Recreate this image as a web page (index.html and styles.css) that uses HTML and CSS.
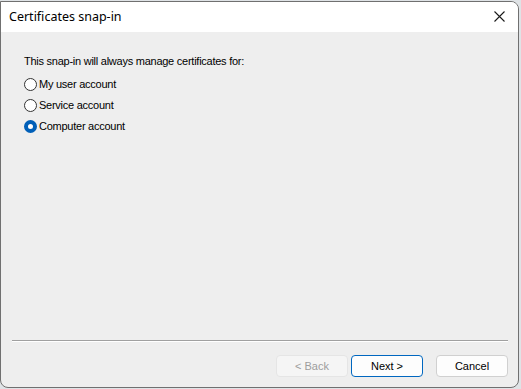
FILE: index.html
```html
<!DOCTYPE html>
<html lang="en">
<head>
  <meta charset="UTF-8" />
  <title>Certificates snap-in</title>
  <link rel="stylesheet" href="styles.css">
</head>
<body>
  <div class="dialog">
    <div class="titlebar">
      <span class="title">Certificates snap-in</span>
      <span class="close">
        <svg width="11" height="11" viewBox="0 0 11 11"><path d="M0.5 0.5 L10.5 10.5 M10.5 0.5 L0.5 10.5" stroke="#1a1a1a" stroke-width="1.1" fill="none"/></svg>
      </span>
    </div>
    <div class="content">
      <div class="main">
        <p class="prompt">This snap-in will always manage certificates for:</p>
        <label class="option"><span class="radio"></span>My user account</label>
        <label class="option"><span class="radio"></span>Service account</label>
        <label class="option"><span class="radio checked"></span>Computer account</label>
      </div>
      <div class="separator"></div>
      <div class="buttons">
        <button class="btn disabled">&lt; Back</button>
        <button class="btn default">Next &gt;</button>
        <button class="btn cancel">Cancel</button>
      </div>
    </div>
  </div>
</body>
</html>
```
FILE: styles.css
```css
body {
  margin: 0;
  background: #dfe3e6;
  font-family: "Liberation Sans", Arial, sans-serif;
  overflow: hidden;
}

.dialog {
  margin-top: 1px;
  width: 517px;
  height: 385px;
  border: 1px solid #707070;
  border-radius: 0 8px 8px 8px;
  background: #eeeeee;
  display: flex;
  flex-direction: column;
  overflow: hidden;
}

.titlebar {
  height: 30px;
  background: #ffffff;
  display: flex;
  align-items: center;
  justify-content: space-between;
  padding: 0 12px 0 8px;
}

.title {
  font-family: "Noto Sans", sans-serif;
  font-size: 12.5px;
  color: #000;
  margin-top: -1px;
}

.close {
  display: flex;
  margin-right: 1px;
  margin-top: -1px;
}

.content {
  flex: 1;
  display: flex;
  flex-direction: column;
  padding: 0 10px 10px 11px;
}

.main {
  flex: 1;
  padding: 22px 0 0 12px;
  font-size: 11px;
  letter-spacing: -0.25px;
  color: #000;
}

.prompt {
  margin: 0 0 10px;
  line-height: 14px;
}

.option {
  display: flex;
  align-items: center;
  height: 13px;
  margin-bottom: 8px;
  line-height: 13px;
}

.radio {
  box-sizing: border-box;
  width: 13px;
  height: 13px;
  border: 1px solid #333;
  border-radius: 50%;
  background: #fff;
  margin-right: 2px;
  flex: none;
}

.radio.checked {
  border: 4px solid #005fb8;
  background: #fff;
}

.separator {
  height: 1px;
  background: #a0a0a0;
  border-bottom: 1px solid #fff;
  margin-bottom: 13px;
}

.buttons {
  display: flex;
  justify-content: flex-end;
}

.btn {
  box-sizing: border-box;
  width: 72px;
  height: 22px;
  border-radius: 4px;
  border: 1px solid #d0d0d0;
  background: #fdfdfd;
  font-family: "Liberation Sans", Arial, sans-serif;
  font-size: 11px;
  color: #000;
  padding: 0;
  margin-left: 3px;
}

.btn.disabled {
  background: #f5f5f5;
  border-color: #e5e5e5;
  color: #9d9d9d;
}

.btn.default {
  border: 1px solid #0067c0;
  box-shadow: inset 0 0 0 1px #fdfdfd;
}

.btn.cancel {
  margin-left: 13px;
}
```
